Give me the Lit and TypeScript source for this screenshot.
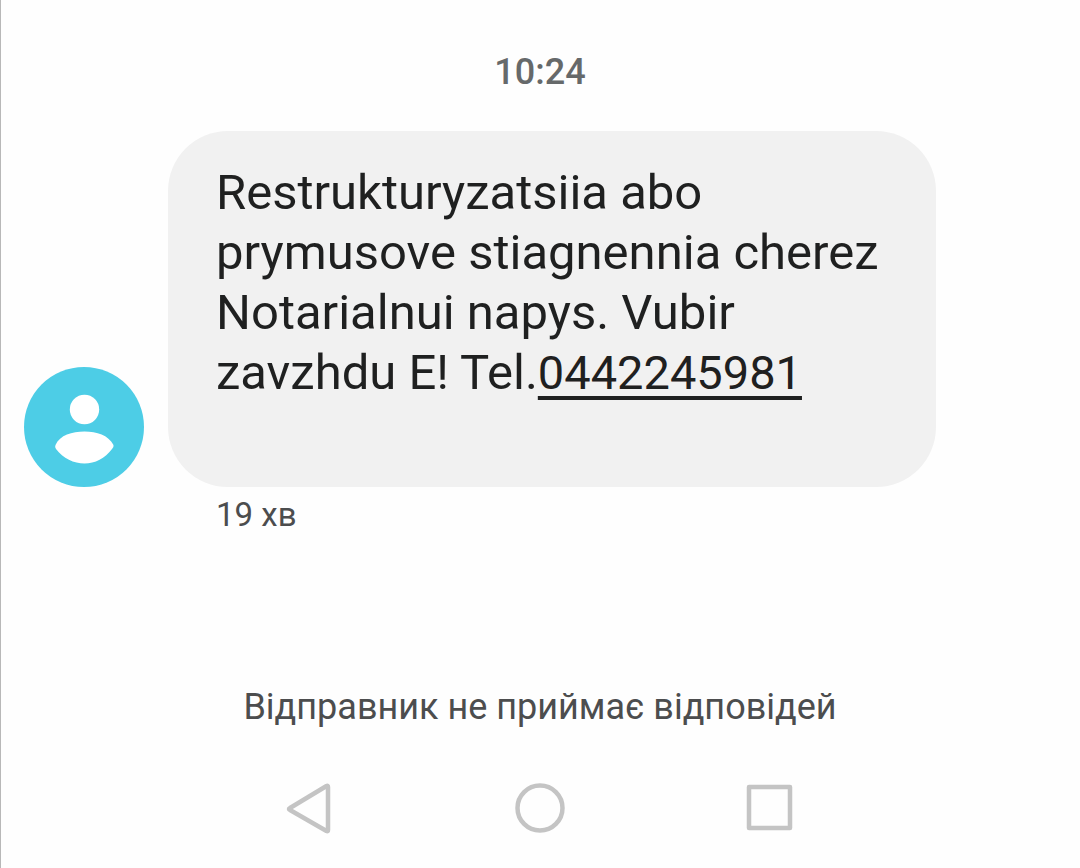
import { LitElement, html, css } from "lit";
import { customElement } from "lit/decorators.js";

@customElement("app-root")
class AppRoot extends LitElement {
  static styles = css`
    :host {
      display: flex;
      flex-direction: column;
      box-sizing: border-box;
      min-height: 100vh;
      box-shadow: inset 1px 0 #b8b8b8;
      background: #fefefe;
      color: #4c4d4e;
      font-family: Roboto, sans-serif;
      font-size: 36px;
      line-height: 44px;
    }
    .time {
      margin-top: 50px;
      text-align: center;
      font-weight: 500;
      color: #66696a;
    }
    .message {
      display: grid;
      grid-template-columns: 120px minmax(0, 768px);
      column-gap: 24px;
      margin: 37px 24px 0;
    }
    .avatar {
      align-self: end;
      width: 120px;
      height: 120px;
      display: block;
    }
    .bubble {
      margin: 0;
      box-sizing: border-box;
      padding: 32px 48px 84px;
      border-radius: 60px;
      background: #f1f1f1;
      color: #1f2020;
      font-size: 49px;
      line-height: 60px;
    }
    .phone {
      color: inherit;
      font-size: 47px;
      line-height: 1;
      text-decoration: underline;
      text-decoration-thickness: 4px;
      text-underline-offset: 7px;
      text-decoration-skip-ink: none;
    }
    .age {
      grid-column: 2;
      padding: 6px 48px 0;
      font-size: 33px;
    }
    .notice {
      margin: auto 24px 0;
      text-align: center;
    }
    .nav {
      display: flex;
      justify-content: center;
      gap: 168px;
      margin: 48px 0 29px;
    }
    .key {
      width: 62px;
      height: 62px;
      padding: 0;
      border: 0;
      background: none;
    }
    .key svg {
      display: block;
      fill: none;
      stroke: #c4c4c4;
      stroke-width: 4.5;
      stroke-linejoin: round;
    }
  `;

  render() {
    return html`
      <time class="time">10:24</time>
      <div class="message">
        <svg class="avatar" viewBox="0 0 120 120" aria-hidden="true">
          <circle cx="60" cy="60" r="60" fill="#4dcde6" />
          <circle cx="60.500" cy="42.500" r="14.700" fill="#fff" />
          <path d="M31.500 78C36 68 48 64.500 60.500 64.500S84 68 89.500 78Q90 80 88 82C81 91.500 71 96.500 60.500 96.500S39 91.500 32 82Q30.500 80 31.500 78Z" fill="#fff" />
        </svg>
        <p class="bubble">Restrukturyzatsiia abo prymusove stiagnennia cherez Notarialnui napys. Vubir zavzhdu E! Tel.<a class="phone" href="tel:0442245981">0442245981</a></p>
        <div class="age">19 хв</div>
      </div>
      <div class="notice">Відправник не приймає відповідей</div>
      <nav class="nav">
        <button class="key" aria-label="Назад"><svg viewBox="0 0 62 62"><path d="M47.500 9Q49 8 49 10V53Q49 55 47.500 54L11 33Q9 32 11 31Z" /></svg></button>
        <button class="key" aria-label="Додому"><svg viewBox="0 0 62 62"><circle cx="31" cy="31" r="22.500" /></svg></button>
        <button class="key" aria-label="Огляд"><svg viewBox="0 0 62 62"><rect x="10" y="10" width="41" height="41" /></svg></button>
      </nav>
    `;
  }
}
